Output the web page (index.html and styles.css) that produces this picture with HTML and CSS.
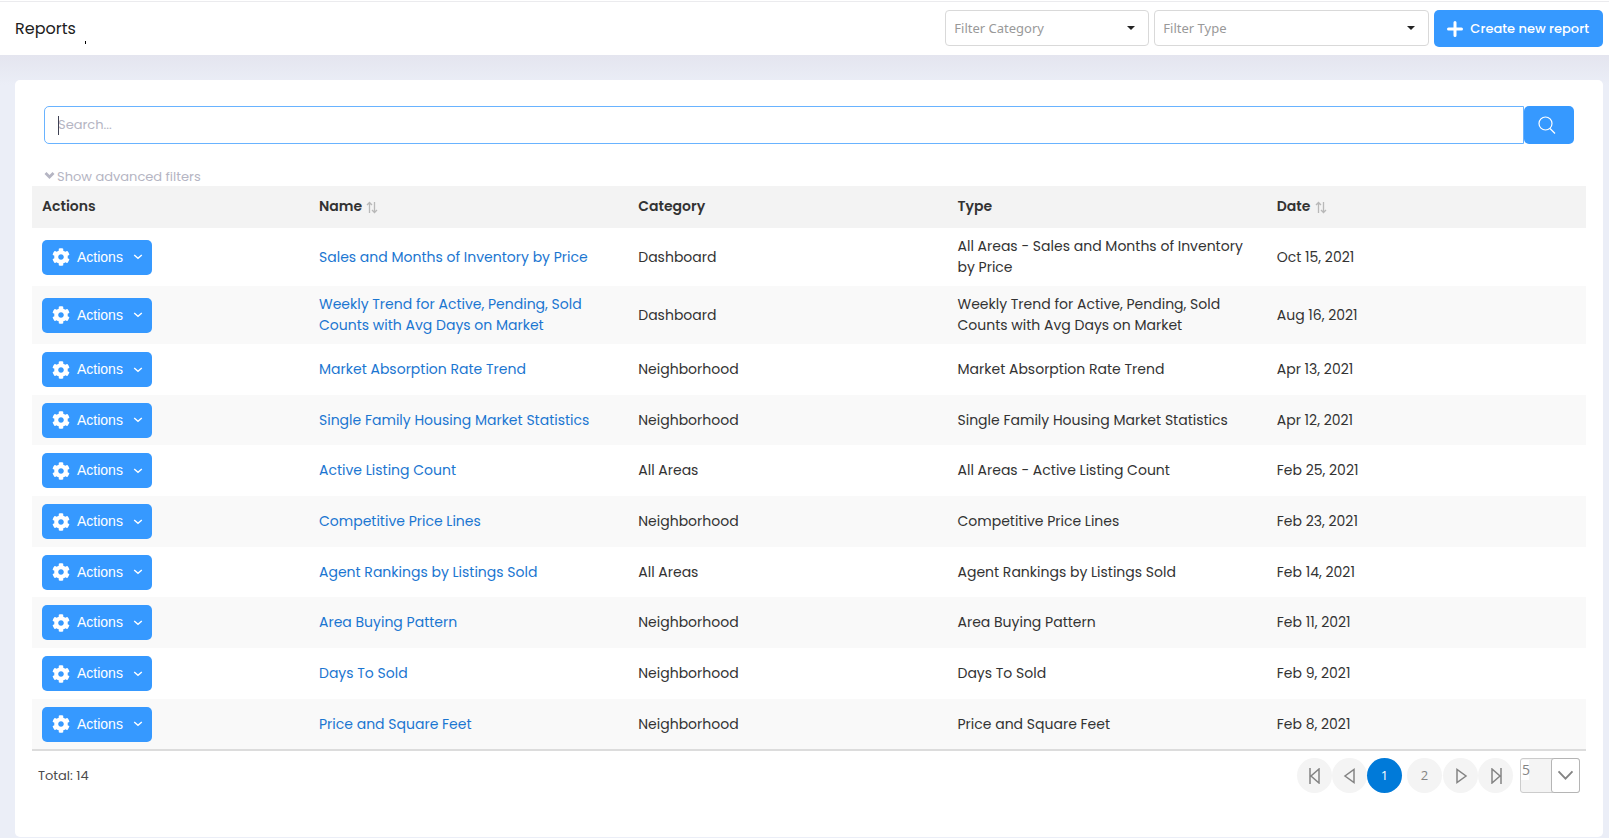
FILE: index.html
```html
<!DOCTYPE html>
<html lang="en">
<head>
<meta charset="utf-8">
<meta name="viewport" content="width=device-width, initial-scale=1">
<title>Reports</title>
<link rel="stylesheet" href="styles.css">
</head>
<body>
<svg class="sprite" aria-hidden="true">
  <symbol id="gear" viewBox="0 0 512 512"><path fill="currentColor" d="M487.400 315.700l-42.600-24.600c4.300-23.200 4.300-47 0-70.200l42.600-24.600c4.900-2.800 7.100-8.600 5.500-14-11.100-35.600-30-67.800-54.700-94.600-3.800-4.100-10-5.100-14.800-2.300L380.800 110c-17.900-15.400-38.500-27.300-60.800-35.100V25.800c0-5.600-3.900-10.500-9.400-11.700-36.700-8.200-74.300-7.800-109.200 0-5.500 1.200-9.400 6.100-9.400 11.700V75c-22.200 7.900-42.800 19.800-60.800 35.100L88.700 85.500c-4.900-2.800-11-1.900-14.800 2.300-24.700 26.700-43.600 58.900-54.700 94.600-1.700 5.400.6 11.200 5.500 14L67.300 221c-4.300 23.200-4.300 47 0 70.200l-42.600 24.600c-4.900 2.800-7.100 8.600-5.500 14 11.100 35.600 30 67.800 54.700 94.600 3.800 4.100 10 5.100 14.800 2.300l42.600-24.600c17.900 15.400 38.500 27.300 60.800 35.100v49.200c0 5.600 3.900 10.500 9.400 11.700 36.700 8.200 74.300 7.800 109.200 0 5.500-1.200 9.400-6.100 9.400-11.700v-49.200c22.200-7.900 42.800-19.800 60.800-35.100l42.600 24.600c4.900 2.800 11 1.900 14.800-2.300 24.700-26.700 43.600-58.900 54.700-94.600 1.500-5.500-.7-11.300-5.600-14.100zM256 336c-44.100 0-80-35.900-80-80s35.900-80 80-80 80 35.900 80 80-35.900 80-80 80z"/></symbol>
  <symbol id="chevron" viewBox="0 0 10 10"><path d="M1.200 3 5 6.300l3.800-3.300" fill="none" stroke="currentColor" stroke-width="1.400"/></symbol>
  <symbol id="sort" viewBox="0 0 12 13"><path d="M3.500 12V1.500M1 4l2.500-2.500L6 4M8.500 1v10.500M6 9l2.500 2.500L11 9" fill="none" stroke="currentColor" stroke-width="1.300"/></symbol>
</svg>

<header class="topbar">
  <h1 class="title">Reports</h1>
  <div class="toolbar">
    <div class="picker picker-category">
      <select class="picker-field" aria-label="Filter Category"><option>Filter Category</option></select>
    </div>
    <div class="picker picker-type">
      <select class="picker-field" aria-label="Filter Type"><option>Filter Type</option></select>
    </div>
    <button class="create" type="button">
      <svg class="plus" viewBox="0 0 16 16" aria-hidden="true"><path d="M8 1.500v13M1.500 8h13" stroke="currentColor" stroke-width="3" stroke-linecap="round"/></svg>
      Create new report
    </button>
  </div>
</header>

<main class="page">
  <section class="card">
    <form class="search">
      <div class="search-box">
        <input class="search-input" type="text" placeholder="Search..." aria-label="Search">
        <span class="caret"></span>
      </div>
      <button class="search-button" type="button" aria-label="Search">
        <svg class="search-icon" viewBox="0 0 18 18" aria-hidden="true"><circle cx="7.500" cy="7.500" r="6.500" fill="none" stroke="currentColor" stroke-width="1.200"/><path d="M12 12.500 17 17.500" stroke="currentColor" stroke-width="1.300"/></svg>
      </button>
    </form>
    <button class="advanced" type="button">
      <svg class="advanced-icon" viewBox="0 0 10 8" aria-hidden="true"><path d="M1 1l4 4 4-4" fill="none" stroke="currentColor" stroke-width="2.800"/></svg>
      Show advanced filters
    </button>

    <table class="reports">
      <thead>
        <tr>
          <th class="col-actions">Actions</th>
          <th>Name <svg class="sort"><use href="#sort"/></svg></th>
          <th>Category</th>
          <th>Type</th>
          <th>Date <svg class="sort"><use href="#sort"/></svg></th>
        </tr>
      </thead>
      <tbody>
        <tr>
          <td><button class="action" type="button"><svg class="gear"><use href="#gear"/></svg>Actions<svg class="chevron"><use href="#chevron"/></svg></button></td>
          <td><a href="#">Sales and Months of Inventory by Price</a></td><td>Dashboard</td><td>All Areas - Sales and Months of Inventory by Price</td><td>Oct 15, 2021</td>
        </tr>
        <tr>
          <td><button class="action" type="button"><svg class="gear"><use href="#gear"/></svg>Actions<svg class="chevron"><use href="#chevron"/></svg></button></td>
          <td><a href="#">Weekly Trend for Active, Pending, Sold Counts with Avg Days on Market</a></td><td>Dashboard</td><td>Weekly Trend for Active, Pending, Sold Counts with Avg Days on Market</td><td>Aug 16, 2021</td>
        </tr>
        <tr>
          <td><button class="action" type="button"><svg class="gear"><use href="#gear"/></svg>Actions<svg class="chevron"><use href="#chevron"/></svg></button></td>
          <td><a href="#">Market Absorption Rate Trend</a></td><td>Neighborhood</td><td>Market Absorption Rate Trend</td><td>Apr 13, 2021</td>
        </tr>
        <tr>
          <td><button class="action" type="button"><svg class="gear"><use href="#gear"/></svg>Actions<svg class="chevron"><use href="#chevron"/></svg></button></td>
          <td><a href="#">Single Family Housing Market Statistics</a></td><td>Neighborhood</td><td>Single Family Housing Market Statistics</td><td>Apr 12, 2021</td>
        </tr>
        <tr>
          <td><button class="action" type="button"><svg class="gear"><use href="#gear"/></svg>Actions<svg class="chevron"><use href="#chevron"/></svg></button></td>
          <td><a href="#">Active Listing Count</a></td><td>All Areas</td><td>All Areas - Active Listing Count</td><td>Feb 25, 2021</td>
        </tr>
        <tr>
          <td><button class="action" type="button"><svg class="gear"><use href="#gear"/></svg>Actions<svg class="chevron"><use href="#chevron"/></svg></button></td>
          <td><a href="#">Competitive Price Lines</a></td><td>Neighborhood</td><td>Competitive Price Lines</td><td>Feb 23, 2021</td>
        </tr>
        <tr>
          <td><button class="action" type="button"><svg class="gear"><use href="#gear"/></svg>Actions<svg class="chevron"><use href="#chevron"/></svg></button></td>
          <td><a href="#">Agent Rankings by Listings Sold</a></td><td>All Areas</td><td>Agent Rankings by Listings Sold</td><td>Feb 14, 2021</td>
        </tr>
        <tr>
          <td><button class="action" type="button"><svg class="gear"><use href="#gear"/></svg>Actions<svg class="chevron"><use href="#chevron"/></svg></button></td>
          <td><a href="#">Area Buying Pattern</a></td><td>Neighborhood</td><td>Area Buying Pattern</td><td>Feb 11, 2021</td>
        </tr>
        <tr>
          <td><button class="action" type="button"><svg class="gear"><use href="#gear"/></svg>Actions<svg class="chevron"><use href="#chevron"/></svg></button></td>
          <td><a href="#">Days To Sold</a></td><td>Neighborhood</td><td>Days To Sold</td><td>Feb 9, 2021</td>
        </tr>
        <tr>
          <td><button class="action" type="button"><svg class="gear"><use href="#gear"/></svg>Actions<svg class="chevron"><use href="#chevron"/></svg></button></td>
          <td><a href="#">Price and Square Feet</a></td><td>Neighborhood</td><td>Price and Square Feet</td><td>Feb 8, 2021</td>
        </tr>
      </tbody>
    </table>

    <footer class="footer">
      <span class="total">Total: 14</span>
      <nav class="pager" aria-label="Pages">
        <button class="page-button" type="button" aria-label="First page"><svg class="page-icon" viewBox="0 0 16 16"><path d="M3 0v16M12 1v14L4 8z"/></svg></button>
        <button class="page-button" type="button" aria-label="Previous page"><svg class="page-icon" viewBox="0 0 16 16"><path d="M12 1.500v13L3 8z"/></svg></button>
        <span class="pages">
          <button class="page-button current" type="button" aria-current="page">1</button>
          <button class="page-button" type="button">2</button>
        </span>
        <button class="page-button" type="button" aria-label="Next page"><svg class="page-icon" viewBox="0 0 16 16"><path d="M4 1.500v13l9-6.500z"/></svg></button>
        <button class="page-button" type="button" aria-label="Last page"><svg class="page-icon" viewBox="0 0 16 16"><path d="M13 0v16M4 1v14l8-7z"/></svg></button>
        <span class="size">
          <select class="size-field" aria-label="Rows per page"><option>5</option></select>
          <svg class="size-arrow" viewBox="0 0 29 33" aria-hidden="true"><path d="M7 12l7.500 8 7.500-8" fill="none" stroke="#848484" stroke-width="2"/></svg>
        </span>
      </nav>
    </footer>
  </section>
</main>
</body>
</html>
```

FILE: styles.css
```css
* {
  box-sizing: border-box;
}

body {
  margin: 0;
  min-height: 100vh;
  display: flex;
  flex-direction: column;
  background: #ebeef7;
  color: #333;
  font-family: Poppins, Inter, sans-serif;
  font-size: 14px;
  line-height: 21px;
}

button,
input,
select {
  font: inherit;
  margin: 0;
}

button {
  border: 0;
  padding: 0;
  cursor: pointer;
}

.sprite {
  position: absolute;
  width: 0;
  height: 0;
}

.topbar {
  display: flex;
  align-items: center;
  justify-content: space-between;
  height: 55px;
  padding: 2px 6px 0 15px;
  background: linear-gradient(#fff 1px, #ebebee 1px, #ebebee 2px, #fff 2px);
}

.title {
  position: relative;
  margin: 0;
  font-size: 16px;
  font-weight: 400;
  color: #212121;
}

.title::after {
  content: "";
  position: absolute;
  left: 70px;
  bottom: -5px;
  width: 1px;
  height: 3px;
  background: #000;
}

.toolbar {
  display: flex;
  align-items: flex-start;
  gap: 5px;
}

.picker {
  position: relative;
}

.picker::after {
  content: "";
  position: absolute;
  right: 14px;
  top: 16px;
  border: 4px solid transparent;
  border-top-color: #222;
  border-bottom: 0;
  pointer-events: none;
}

.picker-category {
  width: 204px;
}

.picker-type {
  width: 275px;
}

.picker-field {
  appearance: none;
  display: block;
  width: 100%;
  height: 36px;
  padding: 0 8px;
  border: 1px solid #d9d9d9;
  border-radius: 4px;
  background: #fff;
  color: #999;
  font-family: "Noto Sans", sans-serif;
  font-size: 13px;
}

.create {
  display: flex;
  align-items: center;
  gap: 7px;
  height: 37px;
  padding: 0 14px 0 13px;
  border-radius: 5px;
  background: #3699ff;
  color: #fff;
  font-size: 13px;
  font-weight: 500;
  white-space: nowrap;
}

.plus {
  width: 16px;
  height: 16px;
}

.page {
  flex: 1;
  display: flex;
  padding: 25px 6px 1px 15px;
  background: linear-gradient(#e4e5ef, #ebeef7 30px);
}

.card {
  flex: 1;
  min-width: 0;
  padding: 26px 17px 0;
  border-radius: 5px;
  background: #fff;
}

.search {
  display: flex;
  padding: 0 12px;
}

.search-box {
  position: relative;
  flex: 1;
}

.search-input {
  display: block;
  width: 100%;
  height: 38px;
  padding: 0 13px;
  border: 1px solid #69b3ff;
  border-radius: 5px 0 0 5px;
  outline: 0;
  background: #fff;
  font-size: 13px;
}

.search-input::placeholder {
  color: #b5b5c3;
  opacity: 1;
}

.caret {
  position: absolute;
  left: 14px;
  top: 10px;
  width: 1px;
  height: 19px;
  background: #3f4254;
}

.search-button {
  display: flex;
  align-items: center;
  justify-content: center;
  width: 50px;
  height: 38px;
  padding-right: 4px;
  border-radius: 5px;
  background: #3699ff;
  color: #fff;
}

.search-icon {
  width: 18px;
  height: 18px;
}

.advanced {
  display: flex;
  align-items: center;
  gap: 2px;
  margin: 22px 12px 0;
  height: 20px;
  background: none;
  color: #b5b5c3;
  font-size: 13px;
}

.advanced-icon {
  width: 11px;
  height: 8px;
}

.reports {
  width: 100%;
  table-layout: fixed;
  border-collapse: separate;
  border-spacing: 0;
  border-bottom: 2px solid #dcdcdc;
}

.reports th {
  height: 42px;
  padding: 0 10px 2px;
  background: #f3f3f3;
  text-align: left;
  font-weight: 600;
}

.reports .col-actions {
  width: 277px;
}

.reports td {
  height: 51px;
  padding: 7px 10px;
  overflow-wrap: break-word;
}

.reports tr:nth-child(3n+1) td {
  height: 50px;
}

.reports tr:nth-child(-n+2) td {
  height: 58px;
}

.reports tr:nth-child(even) td {
  background: #f9f9f9;
}

.reports a {
  color: #1b76d1;
  text-decoration: none;
}

.sort {
  width: 12px;
  height: 13px;
  margin-left: 1px;
  color: #b8b8b8;
  vertical-align: -3px;
}

.action {
  display: flex;
  align-items: center;
  width: 110px;
  height: 35px;
  padding: 0 9px 0 10px;
  border-radius: 5px;
  background: #3699ff;
  color: #fff;
  font-family: "Liberation Sans", Arial, sans-serif;
  font-size: 14px;
}

.gear {
  width: 18px;
  height: 18px;
  margin-right: 7px;
}

.chevron {
  width: 10px;
  height: 10px;
  margin-left: auto;
}

.footer {
  display: flex;
  align-items: center;
  justify-content: space-between;
  padding: 7px 6px 0;
}

.total {
  color: #4b4b4b;
  font-size: 13px;
}

.pager {
  display: flex;
  align-items: center;
}

.pages {
  display: flex;
  gap: 5px;
  margin-right: 1px;
}

.page-button {
  display: flex;
  align-items: center;
  justify-content: center;
  width: 35px;
  height: 35px;
  border-radius: 50%;
  background: #f4f4f4;
  color: #848484;
  font-family: "Open Sans", sans-serif;
  font-size: 13px;
}

.page-button.current {
  background: #007ad9;
  color: #fff;
}

.page-icon {
  width: 16px;
  height: 16px;
  fill: none;
  stroke: #848484;
  stroke-width: 1.5;
}

.size {
  position: relative;
  margin-left: 7px;
}

.size-field {
  appearance: none;
  display: block;
  width: 60px;
  height: 35px;
  padding: 0 0 12px 1px;
  border: 1px solid #ccc;
  border-radius: 3px;
  background: linear-gradient(#fff, #fff) 0 1px / 8px 20px no-repeat #f4f4f4;
  color: #848484;
  font-family: "Open Sans", sans-serif;
  font-size: 14px;
}

.size-arrow {
  position: absolute;
  right: 0;
  top: 0;
  width: 29px;
  height: 35px;
  border: 1px solid #b5b5b5;
  border-radius: 3px;
  background: #fff;
  pointer-events: none;
}
```
